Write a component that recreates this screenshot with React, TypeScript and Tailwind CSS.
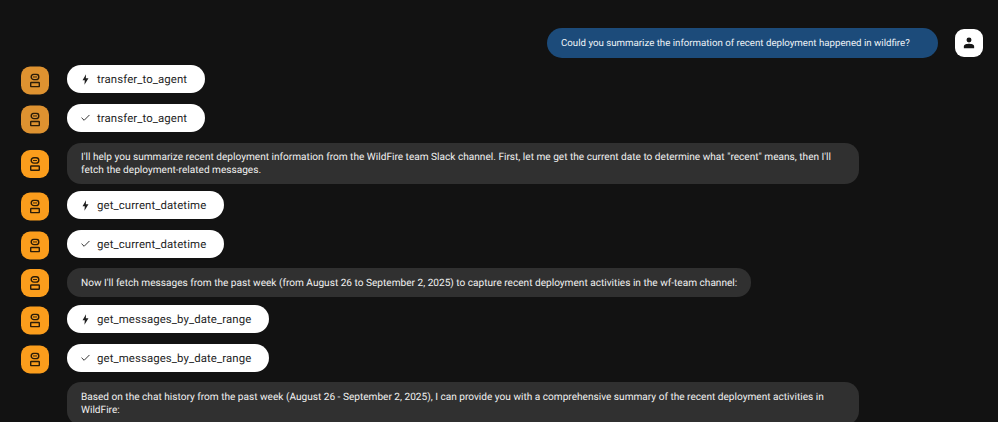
import { Check } from "lucide-react";

const fontStack = "[font-family:Roboto,'Liberation_Sans',sans-serif] [text-rendering:geometricPrecision]";

// Bot glyph used on every agent avatar.
function BotAvatar({ dim, nudge }: { dim?: boolean; nudge?: boolean }) {
  return (
    <div
      className={`flex h-[28px] w-[28px] shrink-0 items-center justify-center rounded-[9px] ${
        dim ? "bg-[#de9230]" : "bg-[#fb9d1c]"
      } ${nudge ? "translate-y-[1.5px]" : ""}`}
    >
      <svg width="10" height="14" viewBox="0 0 10 14" fill="none" stroke="#2b1c08" strokeWidth="1.4">
        <rect x="1.2" y="0.7" width="7.6" height="5.4" rx="2.7" />
        <rect x="0.7" y="9" width="8.6" height="4.2" rx="0.5" />
        <rect x="3" y="3" width="4" height="0.9" fill="#2b1c08" stroke="none" />
      </svg>
    </div>
  );
}

function ToolPill({ name, done, dim }: { name: string; done?: boolean; dim?: boolean }) {
  return (
    <div className="flex items-center gap-[18px]">
      <BotAvatar dim={dim} nudge />
      <div className="flex h-[28px] items-center rounded-full bg-white pl-[13px] pr-[18px] text-[#1f1f1f]">
        <span className="flex w-[11px] justify-center">
          {done ? (
            <Check size={14} strokeWidth={2} />
          ) : (
            <svg width="7" height="11" viewBox="0 0 8 12" fill="#1f1f1f">
              <path d="M4.6 0 L0.6 6.8 H3.2 L2.8 12 L7.4 4.7 H4.4 Z" />
            </svg>
          )}
        </span>
        <span className="ml-[6px] text-[11.4px] leading-[14px] tracking-[0.1px]">{name}</span>
      </div>
    </div>
  );
}

function Bubble({ lines }: { lines: string[] }) {
  return (
    <div className="-mb-[4px] flex items-center gap-[18px]">
      <BotAvatar />
      <div className="w-[792px] rounded-[14px] bg-[#303030] py-[7.5px] pl-[14px] pr-[14px] text-[10.1px] leading-[13px] text-[#f0f0f0]">
        {lines.map((line) => (
          <div key={line}>{line}</div>
        ))}
      </div>
    </div>
  );
}

export default function App() {
  return (
    <div className={`h-[422px] w-[998px] overflow-hidden bg-[#121212] pl-[21px] pr-[15px] pt-[28px] ${fontStack}`}>
      {/* Message from the user */}
      <div className="mb-[7px] flex items-center justify-end gap-[17px]">
        <div className="flex h-[30px] w-[391px] items-center rounded-full bg-[#1c4b7a] pb-[0px] pl-[14px] pt-[2px] text-[9.7px] text-[#eef3f7]">
          Could you summarize the information of recent deployment happened in wildfire?
        </div>
        <div className="flex h-[28px] w-[28px] items-center justify-center rounded-[9px] bg-white">
          <svg width="12" height="12" viewBox="0 0 14 14" fill="#161616">
            <circle cx="7" cy="3.6" r="2.9" />
            <path d="M1 13 V11 C1 8.8 4.5 8 7 8 C9.5 8 13 8.8 13 11 V13 Z" />
          </svg>
        </div>
      </div>

      {/* Conversation with the agent */}
      <div className="flex flex-col gap-[11px]">
        <ToolPill name="transfer_to_agent" dim />
        <ToolPill name="transfer_to_agent" done dim />
        <Bubble
          lines={[
            "I'll help you summarize recent deployment information from the WildFire team Slack channel. First, let me get the current date to determine what \"recent\" means, then I'll",
            "fetch the deployment-related messages.",
          ]}
        />
        <ToolPill name="get_current_datetime" />
        <ToolPill name="get_current_datetime" done />
        <div className="-mb-[3px] -mt-[1px] flex items-center gap-[18px]">
          <BotAvatar />
          <div className="rounded-[14px] bg-[#303030] pb-[7px] pl-[14px] pr-[14px] pt-[9px] text-[10.1px] leading-[13px] text-[#f0f0f0]">
            Now I'll fetch messages from the past week (from August 26 to September 2, 2025) to capture recent deployment activities in the wf-team channel:
          </div>
        </div>
        <ToolPill name="get_messages_by_date_range" />
        <ToolPill name="get_messages_by_date_range" done />
        <div className="-mt-[1px] pl-[46px]">
          <div className="w-[792px] rounded-[14px] bg-[#303030] pb-[8px] pl-[14px] pr-[14px] pt-[9px] text-[10.1px] leading-[13px] text-[#f0f0f0]">
            <div>
              Based on the chat history from the past week (August 26 - September 2, 2025), I can provide you with a comprehensive summary of the recent deployment activities in
            </div>
            <div>WildFire:</div>
          </div>
        </div>
      </div>
    </div>
  );
}
